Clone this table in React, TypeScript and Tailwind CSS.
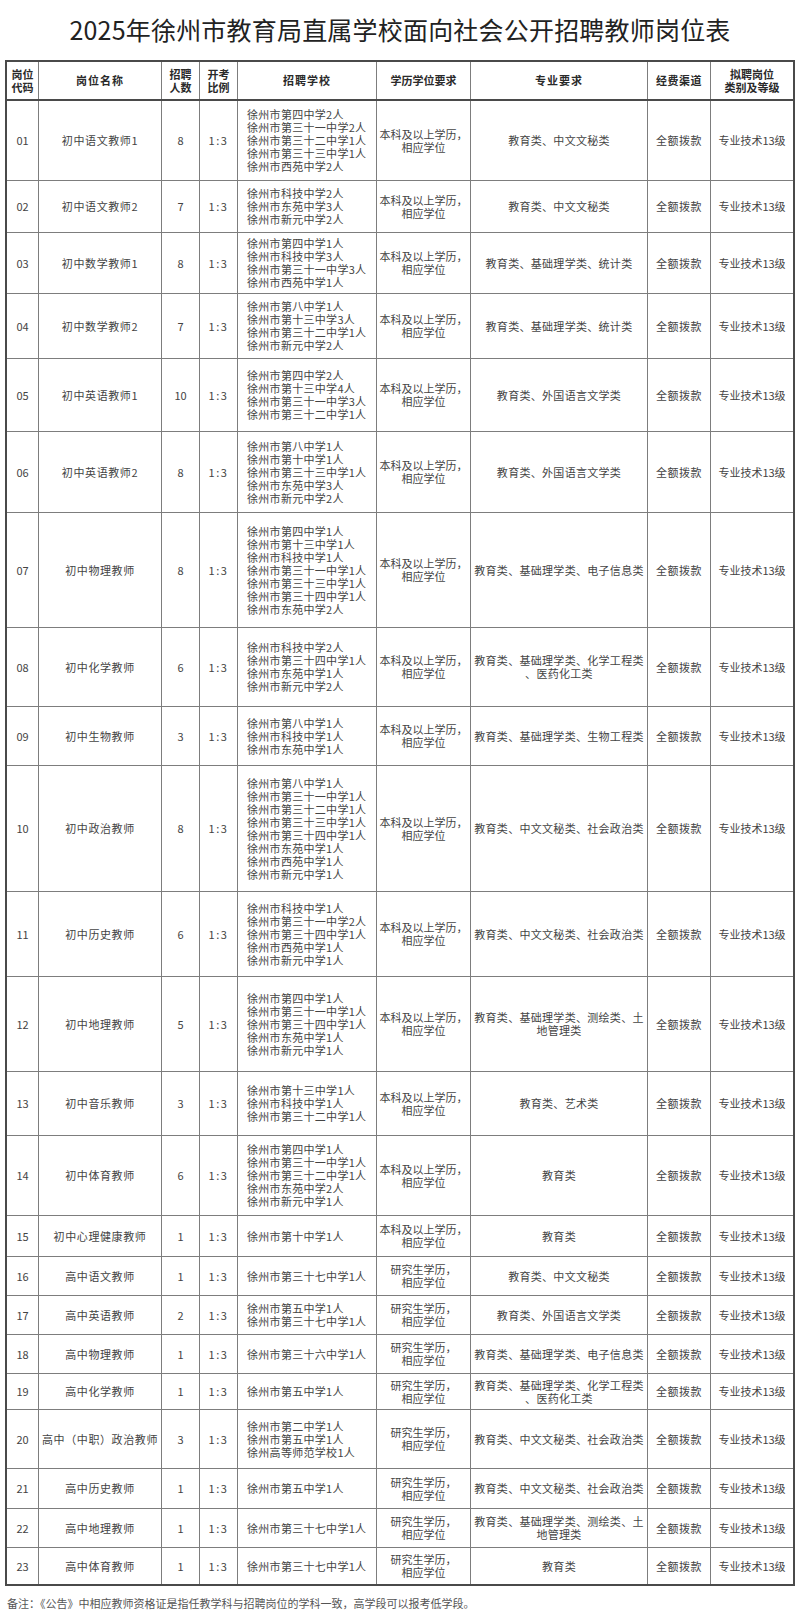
import React from "react";

interface Post {
  code: string;
  name: string;
  count: string;
  schools: string[];
  edu: "b" | "g";
  major: string[];
  h: string;
}

const BASIC = ["教育类、中文文秘类"];
const MATH = ["教育类、基础理学类、统计类"];
const LANG = ["教育类、外国语言文学类"];
const PHYS = ["教育类、基础理学类、电子信息类"];
const CHEM = ["教育类、基础理学类、化学工程类", "、医药化工类"];
const POLI = ["教育类、中文文秘类、社会政治类"];
const GEO = ["教育类、基础理学类、测绘类、土", "地管理类"];
const EDU = ["教育类"];

const POSTS: Post[] = [
  { code: "01", name: "初中语文教师1", count: "8", edu: "b", major: BASIC, h: "h-[80px]",
    schools: ["徐州市第四中学2人", "徐州市第三十一中学2人", "徐州市第三十二中学1人", "徐州市第三十三中学1人", "徐州市西苑中学2人"] },
  { code: "02", name: "初中语文教师2", count: "7", edu: "b", major: BASIC, h: "h-[52px]",
    schools: ["徐州市科技中学2人", "徐州市东苑中学3人", "徐州市新元中学2人"] },
  { code: "03", name: "初中数学教师1", count: "8", edu: "b", major: MATH, h: "h-[61px]",
    schools: ["徐州市第四中学1人", "徐州市科技中学3人", "徐州市第三十一中学3人", "徐州市西苑中学1人"] },
  { code: "04", name: "初中数学教师2", count: "7", edu: "b", major: MATH, h: "h-[65px]",
    schools: ["徐州市第八中学1人", "徐州市第十三中学3人", "徐州市第三十二中学1人", "徐州市新元中学2人"] },
  { code: "05", name: "初中英语教师1", count: "10", edu: "b", major: LANG, h: "h-[73px]",
    schools: ["徐州市第四中学2人", "徐州市第十三中学4人", "徐州市第三十一中学3人", "徐州市第三十二中学1人"] },
  { code: "06", name: "初中英语教师2", count: "8", edu: "b", major: LANG, h: "h-[81px]",
    schools: ["徐州市第八中学1人", "徐州市第十中学1人", "徐州市第三十三中学1人", "徐州市东苑中学3人", "徐州市新元中学2人"] },
  { code: "07", name: "初中物理教师", count: "8", edu: "b", major: PHYS, h: "h-[115px]",
    schools: ["徐州市第四中学1人", "徐州市第十三中学1人", "徐州市科技中学1人", "徐州市第三十一中学1人", "徐州市第三十三中学1人", "徐州市第三十四中学1人", "徐州市东苑中学2人"] },
  { code: "08", name: "初中化学教师", count: "6", edu: "b", major: CHEM, h: "h-[79px]",
    schools: ["徐州市科技中学2人", "徐州市第三十四中学1人", "徐州市东苑中学1人", "徐州市新元中学2人"] },
  { code: "09", name: "初中生物教师", count: "3", edu: "b", major: ["教育类、基础理学类、生物工程类"], h: "h-[59px]",
    schools: ["徐州市第八中学1人", "徐州市科技中学1人", "徐州市东苑中学1人"] },
  { code: "10", name: "初中政治教师", count: "8", edu: "b", major: POLI, h: "h-[126px]",
    schools: ["徐州市第八中学1人", "徐州市第三十一中学1人", "徐州市第三十二中学1人", "徐州市第三十三中学1人", "徐州市第三十四中学1人", "徐州市东苑中学1人", "徐州市西苑中学1人", "徐州市新元中学1人"] },
  { code: "11", name: "初中历史教师", count: "6", edu: "b", major: POLI, h: "h-[85px]",
    schools: ["徐州市科技中学1人", "徐州市第三十一中学2人", "徐州市第三十四中学1人", "徐州市西苑中学1人", "徐州市新元中学1人"] },
  { code: "12", name: "初中地理教师", count: "5", edu: "b", major: GEO, h: "h-[95px]",
    schools: ["徐州市第四中学1人", "徐州市第三十一中学1人", "徐州市第三十四中学1人", "徐州市东苑中学1人", "徐州市新元中学1人"] },
  { code: "13", name: "初中音乐教师", count: "3", edu: "b", major: ["教育类、艺术类"], h: "h-[64px]",
    schools: ["徐州市第十三中学1人", "徐州市科技中学1人", "徐州市第三十二中学1人"] },
  { code: "14", name: "初中体育教师", count: "6", edu: "b", major: EDU, h: "h-[80px]",
    schools: ["徐州市第四中学1人", "徐州市第三十一中学1人", "徐州市第三十二中学1人", "徐州市东苑中学2人", "徐州市新元中学1人"] },
  { code: "15", name: "初中心理健康教师", count: "1", edu: "b", major: EDU, h: "h-[41px]",
    schools: ["徐州市第十中学1人"] },
  { code: "16", name: "高中语文教师", count: "1", edu: "g", major: BASIC, h: "h-[39px]",
    schools: ["徐州市第三十七中学1人"] },
  { code: "17", name: "高中英语教师", count: "2", edu: "g", major: LANG, h: "h-[39px]",
    schools: ["徐州市第五中学1人", "徐州市第三十七中学1人"] },
  { code: "18", name: "高中物理教师", count: "1", edu: "g", major: PHYS, h: "h-[39px]",
    schools: ["徐州市第三十六中学1人"] },
  { code: "19", name: "高中化学教师", count: "1", edu: "g", major: CHEM, h: "h-[36px]",
    schools: ["徐州市第五中学1人"] },
  { code: "20", name: "高中（中职）政治教师", count: "3", edu: "g", major: POLI, h: "h-[59px]",
    schools: ["徐州市第二中学1人", "徐州市第五中学1人", "徐州高等师范学校1人"] },
  { code: "21", name: "高中历史教师", count: "1", edu: "g", major: POLI, h: "h-[40px]",
    schools: ["徐州市第五中学1人"] },
  { code: "22", name: "高中地理教师", count: "1", edu: "g", major: GEO, h: "h-[39px]",
    schools: ["徐州市第三十七中学1人"] },
  { code: "23", name: "高中体育教师", count: "1", edu: "g", major: EDU, h: "h-[36px]",
    schools: ["徐州市第三十七中学1人"] },
];

const COLS = "grid grid-cols-[32px_123px_38px_38px_139px_94px_177px_63px_82px]";
const CELL = "flex items-center justify-center text-center border-r border-[#7d7d7d]";

export default function App() {
  return (
    <div className="w-[800px] min-h-[1613px] bg-white text-[#444] font-['Noto_Sans_CJK_SC','Noto_Sans',sans-serif]">
      <div className="h-[60px] flex items-center justify-center text-[25px] text-[#222] tracking-[0.2px]">
        2025年徐州市教育局直属学校面向社会公开招聘教师岗位表
      </div>

      <div className="mx-[5px] w-[790px] border-2 border-[#4a4a4a] text-[11px]">
        {/* header */}
        <div className={`${COLS} h-[39px] border-b-2 border-[#4a4a4a] font-bold text-[#2a2a2a] leading-[13px]`}>
          <div className={CELL}>岗位<br />代码</div>
          <div className={`${CELL} tracking-[1px]`}>岗位名称</div>
          <div className={CELL}>招聘<br />人数</div>
          <div className={CELL}>开考<br />比例</div>
          <div className={`${CELL} tracking-[1px]`}>招聘学校</div>
          <div className={CELL}>学历学位要求</div>
          <div className={`${CELL} tracking-[1px]`}>专业要求</div>
          <div className={`${CELL} tracking-[0.5px]`}>经费渠道</div>
          <div className={`${CELL} border-r-0`}>拟聘岗位<br />类别及等级</div>
        </div>

        {POSTS.map((p, i) => (
          <div
            key={p.code}
            className={`${COLS} ${p.h} ${i < POSTS.length - 1 ? "border-b border-[#7d7d7d]" : ""}`}
          >
            <div className={CELL}>{p.code}</div>
            <div className={`${CELL} tracking-[0.6px]`}>{p.name}</div>
            <div className={CELL}>{p.count}</div>
            <div className={`${CELL} tracking-[1.5px]`}>1:3</div>
            <div className="flex flex-col justify-center pl-[9px] border-r border-[#7d7d7d] leading-[13px] tracking-[0.3px]">
              {p.schools.map((s) => (
                <div key={s}>{s}</div>
              ))}
            </div>
            <div className={`${CELL} flex-col leading-[13px]`}>
              <div>{p.edu === "b" ? "本科及以上学历，" : "研究生学历，"}</div>
              <div>相应学位</div>
            </div>
            <div className={`${CELL} flex-col leading-[13px] tracking-[0.3px]`}>
              {p.major.map((m) => (
                <div key={m}>{m}</div>
              ))}
            </div>
            <div className={`${CELL} tracking-[0.5px]`}>全额拨款</div>
            <div className={`${CELL} border-r-0`}>专业技术13级</div>
          </div>
        ))}
      </div>

      <div className="pl-[7px] pt-[9px] text-[11px] text-[#555]">
        备注：《公告》中相应教师资格证是指任教学科与招聘岗位的学科一致，高学段可以报考低学段。
      </div>
    </div>
  );
}
